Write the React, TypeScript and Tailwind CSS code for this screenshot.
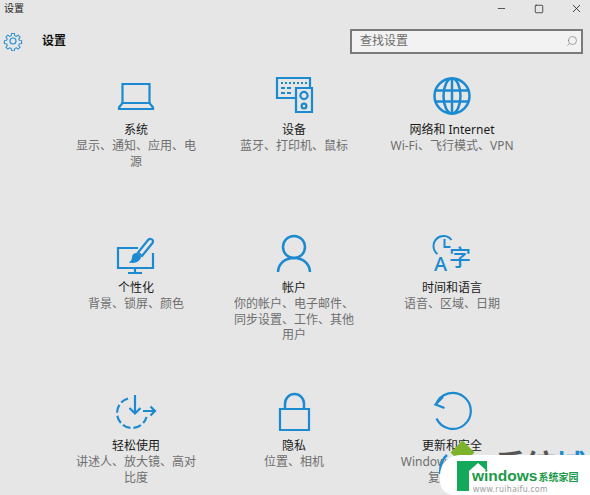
import type { ReactNode } from "react";
import { Minus, Search, Square, X } from "lucide-react";

const cjk = "font-['Noto_Sans','Noto_Sans_CJK_SC',sans-serif]";

function Gear() {
  return (
    <svg viewBox="0 0 24 24" className="w-5 h-5 text-[#2b8fd0]" fill="none" stroke="currentColor" strokeWidth="1.4">
      <circle cx="12" cy="12" r="3.6" />
      <path d="M10.2 2h3.6l.5 3 2.1.9 2.5-1.8 2.5 2.5-1.8 2.5.9 2.1 3 .5v3.6l-3 .5-.9 2.1 1.8 2.5-2.5 2.5-2.5-1.8-2.1.9-.5 3h-3.6l-.5-3-2.1-.9-2.5 1.8-2.5-2.5 1.8-2.5-.9-2.1-3-.5v-3.6l3-.5.9-2.1-1.8-2.5 2.5-2.5 2.5 1.8 2.1-.9z" transform="translate(1.2 1.2) scale(.9)" />
    </svg>
  );
}

const svgProps = {
  viewBox: "0 0 44 44",
  className: "w-11 h-11 text-[#1c8ad0]",
  fill: "none",
  stroke: "currentColor",
  strokeWidth: 2.2,
};

const icons: Record<string, ReactNode> = {
  laptop: (
    <svg {...svgProps}>
      <path d="M8.5 28V9h27v19" />
      <path d="M8.5 28 5 32.5V34h34v-1.5L35.5 28z" />
    </svg>
  ),
  device: (
    <svg {...svgProps}>
      <path d="M23 23H5V3h33v9" />
      <path d="M24 13h16v24H24z" />
      <circle cx="32" cy="20.5" r="3.6" />
      <circle cx="32" cy="31" r="2.4" />
      <path d="M9 8h2M13 8h2M17 8h2M21 8h2M25 8h2M29 8h2M33 8h2M9 13h4M15 13h4M9 18h4M15 18h4" strokeWidth="2" />
    </svg>
  ),
  globe: (
    <svg {...svgProps} strokeWidth={2.5}>
      <circle cx="22" cy="21" r="17.5" />
      <ellipse cx="22" cy="21" rx="8.5" ry="17.5" />
      <path d="M22 4v35M6 15.5h32M6 26.5h32" />
    </svg>
  ),
  paint: (
    <svg {...svgProps}>
      <path d="M24 15H4v20h35V20" />
      <path d="M21 35v5M14 40h14" />
      <path d="M37 6c2 .5 2.5 2.500 1.500 4L28 23l-4-3.500L34 7c1-1 2-1.300 3-1z" />
      <path d="M23 20c-3.500 0-5 2-5 4.500s-1.500 4-3.500 5c4 1 9 .5 11-2.500 1-1 1.500-2 1.500-3.500" fill="currentColor" stroke="none" />
    </svg>
  ),
  person: (
    <svg {...svgProps} strokeWidth={2.5}>
      <circle cx="22" cy="14" r="11" />
      <path d="M6 39C6.500 30.500 13 25 22 25S37.500 30.500 38 39" />
    </svg>
  ),
  time: (
    <svg {...svgProps} strokeWidth={2}>
      <path d="M7.500 21A10 10 0 1 1 21.500 7" />
      <path d="M14.500 6v8h6" />
    </svg>
  ),
  ease: (
    <svg {...svgProps}>
      <path d="M14 7.500A15 15 0 1 0 32.500 26" strokeDasharray="8 3" />
      <path d="M21 4v18M15.500 17l5.500 5.500 5.500-5.500" />
      <path d="M29 20h12M36.500 15.500 41 20l-4.500 4.500" />
    </svg>
  ),
  lock: (
    <svg {...svgProps}>
      <path d="M13 18V12.500a9.500 9.500 0 0 1 19 0V18" strokeWidth="2.500" />
      <path d="M8 18h29v21H8z" />
    </svg>
  ),
  update: (
    <svg {...svgProps}>
      <path d="M6 13.500A18 18 0 1 1 6.500 27.500" />
      <path d="M13 6 5.500 13.500 14.500 17" />
    </svg>
  ),
};

const items = [
  { icon: "laptop", title: "系统", desc: "显示、通知、应用、电源" },
  { icon: "device", title: "设备", desc: "蓝牙、打印机、鼠标" },
  { icon: "globe", title: "网络和 Internet", desc: "Wi-Fi、飞行模式、VPN" },
  { icon: "paint", title: "个性化", desc: "背景、锁屏、颜色" },
  { icon: "person", title: "帐户", desc: "你的帐户、电子邮件、同步设置、工作、其他用户" },
  { icon: "time", title: "时间和语言", desc: "语音、区域、日期" },
  { icon: "ease", title: "轻松使用", desc: "讲述人、放大镜、高对比度" },
  { icon: "lock", title: "隐私", desc: "位置、相机" },
  { icon: "update", title: "更新和安全", desc: "Windows 更新、恢\n复、备份" },
];

function Tile({ icon, title, desc }: { icon: string; title: string; desc: string }) {
  return (
    <div className="flex flex-col items-center text-center">
      <div className="relative w-11 h-11">
        {icons[icon]}
        {icon === "time" && (
          <>
            <span className="absolute left-[4px] top-[21px] text-[20px] leading-[20px] font-medium text-[#1c8ad0]">A</span>
            <span className="absolute left-[19px] top-[11px] text-[22px] leading-[24px] font-medium text-[#1c8ad0]">字</span>
          </>
        )}
      </div>
      <div className="mt-[2px] text-[12px] leading-[17px] text-[#1a1a1a]">{title}</div>
      <div className="w-[128px] whitespace-pre-line text-[12px] leading-[15.5px] text-[#6e6e6e]">{desc}</div>
    </div>
  );
}

function Watermark() {
  return (
    <>
      <div className="absolute left-[496px] top-[448px] h-[7px] overflow-hidden text-[30px] leading-[34px] font-bold text-[#555] whitespace-nowrap">
        系统<span className="text-[#1c8ad0]">城</span>
      </div>
      <div className="absolute left-[454px] top-[444px] w-[17px] h-[17px] rotate-45 bg-[#7cb32b]" />
      <svg className="absolute left-[436px] top-[452px] w-[16px] h-[24px]" viewBox="0 0 16 24" fill="none" stroke="#1c8ad0" strokeWidth="2.5">
        <path d="M11 3C7 6 4 11 4 22" />
      </svg>
      <div className="absolute left-[440px] top-[455px] w-[150px] h-[40px] bg-white rounded-tl-[20px] rounded-bl-[14px]">
        <svg className="absolute left-[17px] top-[6px] w-[30px] h-[30px]" viewBox="0 0 30 30">
          <path d="M0 0h30v30H0z" fill="#14a85a" />
          <path d="M12 30V10l9-8 9 8v20z" fill="#fff" />
        </svg>
        <div className="absolute left-[32px] top-[12px] flex items-baseline whitespace-nowrap font-bold text-[#1a9a48] leading-[17px]">
          <span className="text-[15.5px] font-['Liberation_Sans',sans-serif]">windows</span>
          <span className="ml-[1px] text-[10px]">系统家园</span>
        </div>
        <div className="absolute left-[33px] top-[29px] text-[8px] leading-[10px] tracking-[0.4px] text-[#999]">www.ruihaifu.com</div>
      </div>
    </>
  );
}

export default function App() {
  return (
    <div className={`relative w-[590px] h-[495px] overflow-hidden bg-[#e6e6e6] ${cjk}`}>
      <div className="flex items-center h-[17px] pl-[4px]">
        <span className="text-[10px] text-[#222]">设置</span>
        <div className="ml-auto flex items-center text-[#222]">
          <Minus className="w-[11px] h-[11px] mr-[27px]" strokeWidth={1.6} />
          <Square className="w-[10px] h-[10px] mr-[26px]" strokeWidth={1.8} />
          <X className="w-[13px] h-[13px] mr-[7px]" strokeWidth={1.5} />
        </div>
      </div>
      <div className="flex items-center h-[36px] mt-[6px] pl-[3px] pr-[7px]">
        <Gear />
        <span className="ml-[19px] text-[12px] font-bold text-[#111]">设置</span>
        <div className="ml-auto flex items-center w-[233px] h-[25px] border-2 border-[#7a7a7a] bg-[#f2f2f2] pl-[8px] pr-[3px]">
          <span className="text-[12px] text-[#6b6b6b]">查找设置</span>
          <Search className="ml-auto w-[12px] h-[12px] text-[#777] -scale-x-100" strokeWidth={1.3} />
        </div>
      </div>
      <div className="grid grid-cols-[158px_158px_158px] auto-rows-[158px] mt-[16px] ml-[57px]">
        {items.map((item) => (
          <Tile key={item.title} {...item} />
        ))}
      </div>
      <Watermark />
    </div>
  );
}
